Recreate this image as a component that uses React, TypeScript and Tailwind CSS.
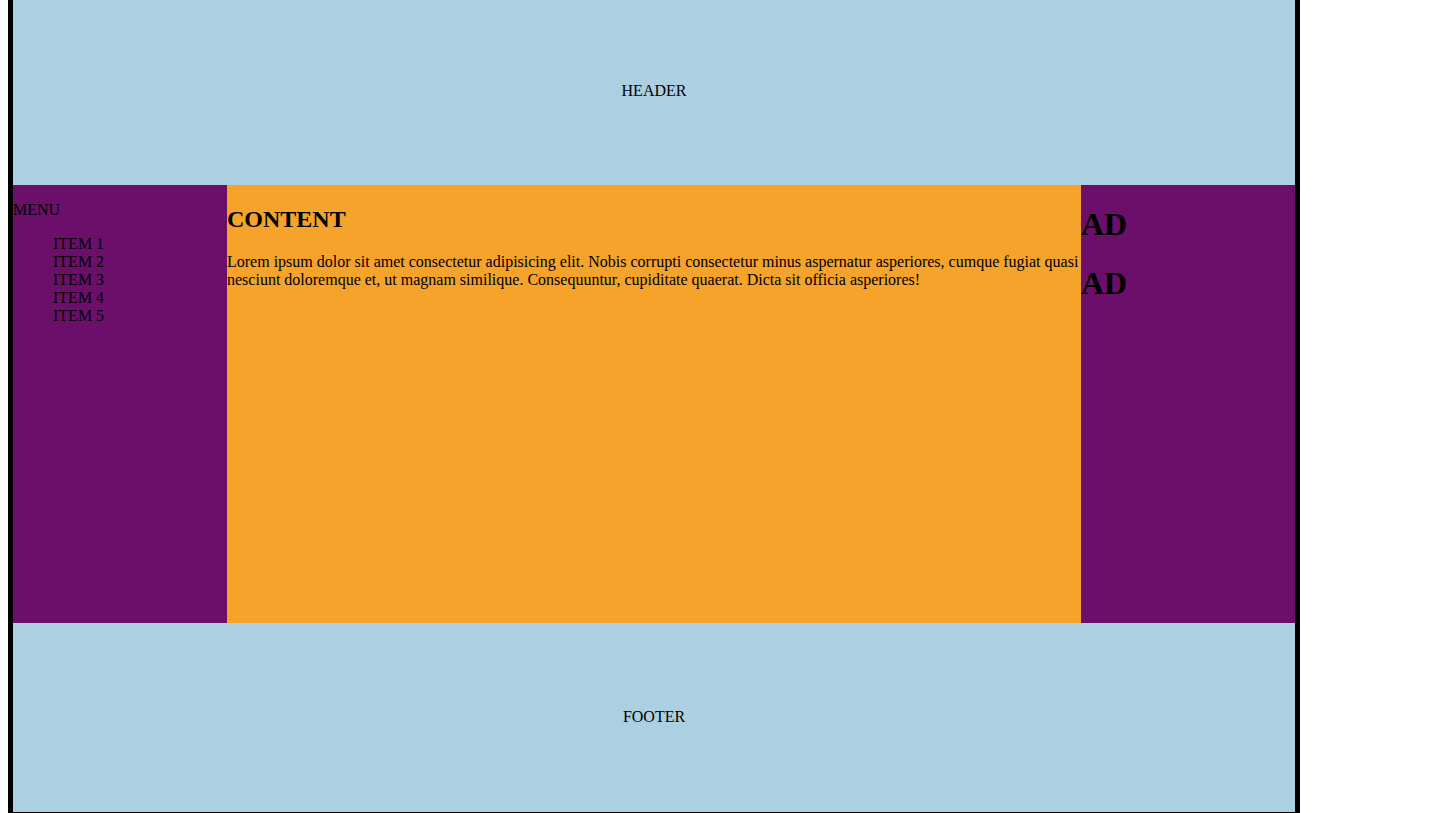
import React from "react";

const items = ["ITEM 1", "ITEM 2", "ITEM 3", "ITEM 4", "ITEM 5"];

const App: React.FC = () => {
  return (
    <div className="min-h-[813px] bg-white font-['Liberation_Serif',serif] text-black">
      <div className="ml-2 w-[1292px] border-x-[5px] border-b border-black">
        {/* Header */}
        <div className="flex h-[185px] items-center justify-center bg-[#acd0e2] pb-1 text-base leading-[18px]">
          HEADER
        </div>

        {/* Middle: menu / content / ads */}
        <div className="grid h-[438px] grid-cols-[214px_1fr_214px]">
          <div className="bg-[#6b0f6b] text-base leading-[18px]">
            <p className="my-4">MENU</p>
            <ul className="my-4 pl-10">
              {items.map((item) => (
                <li key={item}>{item}</li>
              ))}
            </ul>
          </div>

          <div className="bg-[#f5a32a]">
            <h2 className="mt-[21px] mb-[19px] text-2xl font-bold leading-[27.6px]">
              CONTENT
            </h2>
            <p className="text-base leading-[18px]">
              Lorem ipsum dolor sit amet consectetur adipisicing elit. Nobis
              corrupti consectetur minus aspernatur asperiores, cumque fugiat
              quasi nesciunt doloremque et, ut magnam similique. Consequuntur,
              cupiditate quaerat. Dicta sit officia asperiores!
            </p>
          </div>

          <div className="flex flex-col bg-[#6b0f6b]">
            <h1 className="mt-[21.44px] text-[32px] font-bold leading-[36.8px]">
              AD
            </h1>
            <h1 className="mt-[21.44px] text-[32px] font-bold leading-[36.8px]">
              AD
            </h1>
          </div>
        </div>

        {/* Footer */}
        <div className="flex h-[189px] items-center justify-center bg-[#acd0e2] pb-[2px] text-base leading-[18px]">
          FOOTER
        </div>
      </div>
    </div>
  );
};

export default App;
